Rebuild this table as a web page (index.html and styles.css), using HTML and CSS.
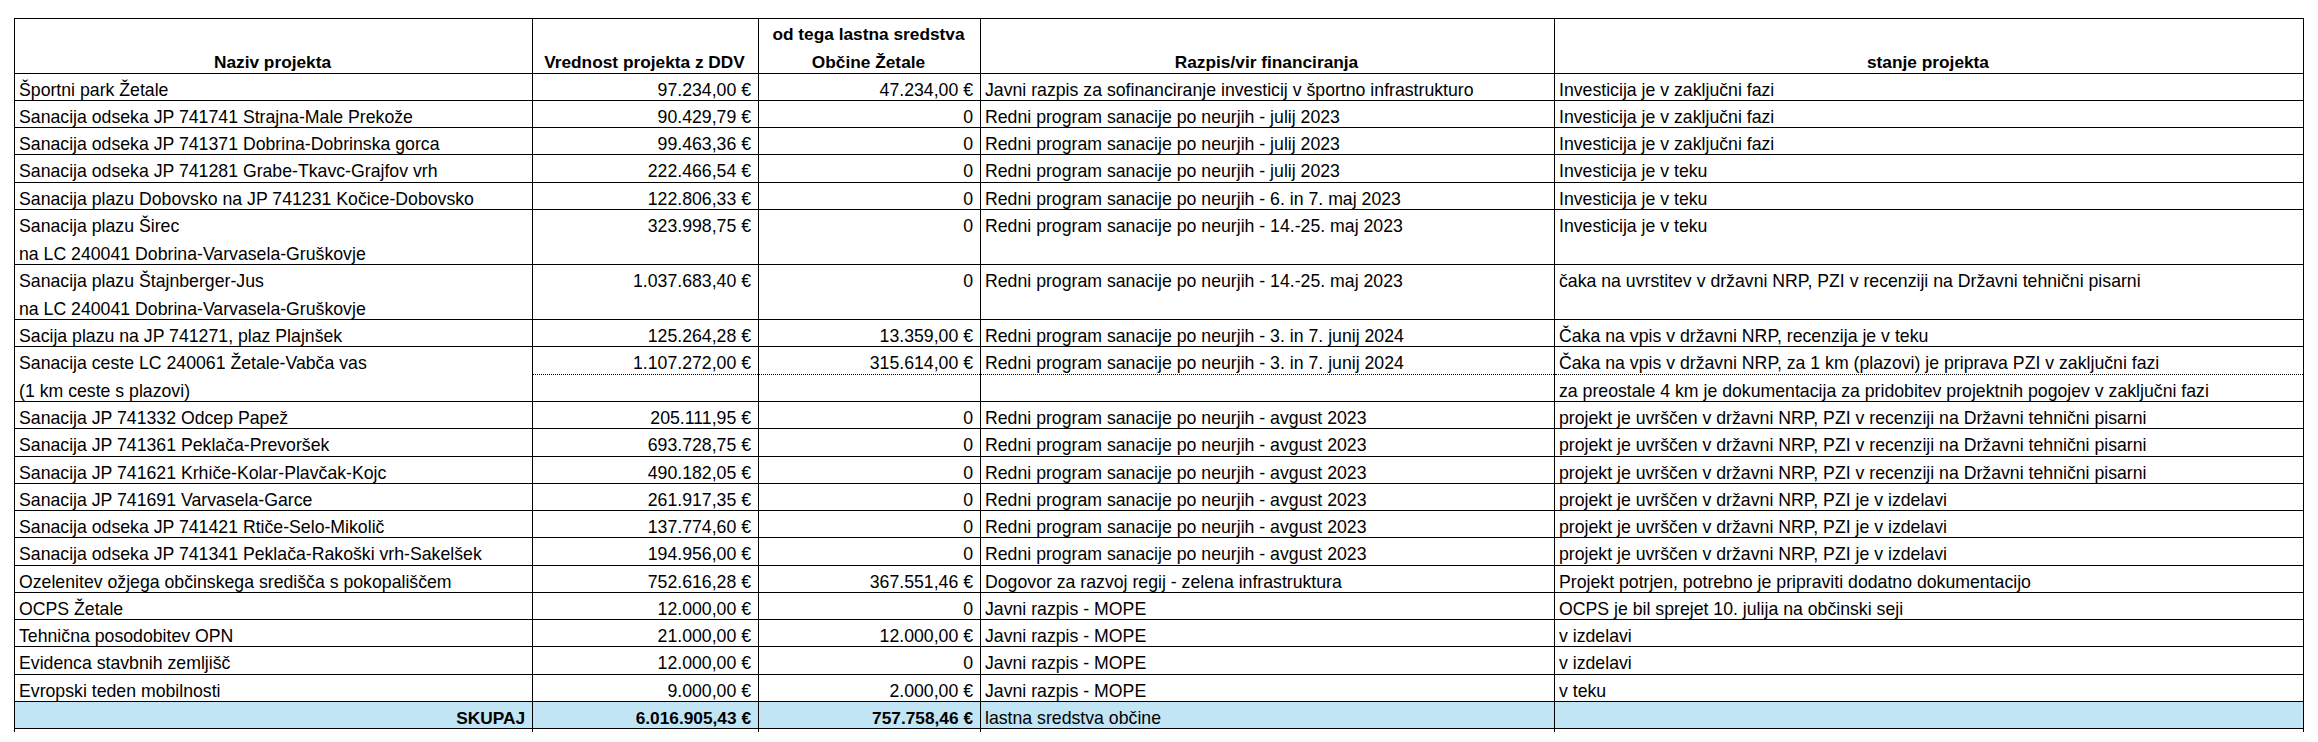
FILE: index.html
```html
<!DOCTYPE html>
<html lang="sl">
<head>
<meta charset="utf-8">
<title>Projekti</title>
<link rel="stylesheet" href="styles.css">
</head>
<body>
<div class="sheet">
<table class="grid">
  <colgroup>
    <col class="c-name"><col class="c-val"><col class="c-own"><col class="c-src"><col class="c-state">
  </colgroup>
  <thead>
    <tr class="head">
      <th>Naziv projekta</th>
      <th>Vrednost projekta z DDV</th>
      <th><div>od tega lastna sredstva</div><div class="l2">Občine Žetale</div></th>
      <th>Razpis/vir financiranja</th>
      <th>stanje projekta</th>
    </tr>
  </thead>
  <tbody>
    <tr><td>Športni park Žetale</td><td class="num">97.234,00 €</td><td class="num">47.234,00 €</td><td>Javni razpis za sofinanciranje investicij v športno infrastrukturo</td><td>Investicija je v zaključni fazi</td></tr>
    <tr><td>Sanacija odseka JP 741741 Strajna-Male Prekože</td><td class="num">90.429,79 €</td><td class="num">0</td><td>Redni program sanacije po neurjih - julij 2023</td><td>Investicija je v zaključni fazi</td></tr>
    <tr><td>Sanacija odseka JP 741371 Dobrina-Dobrinska gorca</td><td class="num">99.463,36 €</td><td class="num">0</td><td>Redni program sanacije po neurjih - julij 2023</td><td>Investicija je v zaključni fazi</td></tr>
    <tr><td>Sanacija odseka JP 741281 Grabe-Tkavc-Grajfov vrh</td><td class="num">222.466,54 €</td><td class="num">0</td><td>Redni program sanacije po neurjih - julij 2023</td><td>Investicija je v teku</td></tr>
    <tr><td>Sanacija plazu Dobovsko na JP 741231 Kočice-Dobovsko</td><td class="num">122.806,33 €</td><td class="num">0</td><td>Redni program sanacije po neurjih - 6. in 7. maj 2023</td><td>Investicija je v teku</td></tr>
    <tr class="dbl"><td><div>Sanacija plazu Širec</div><div class="l2">na LC 240041 Dobrina-Varvasela-Gruškovje</div></td><td class="num">323.998,75 €</td><td class="num">0</td><td>Redni program sanacije po neurjih - 14.-25. maj 2023</td><td>Investicija je v teku</td></tr>
    <tr class="dbl"><td><div>Sanacija plazu Štajnberger-Jus</div><div class="l2">na LC 240041 Dobrina-Varvasela-Gruškovje</div></td><td class="num">1.037.683,40 €</td><td class="num">0</td><td>Redni program sanacije po neurjih - 14.-25. maj 2023</td><td>čaka na uvrstitev v državni NRP, PZI v recenziji na Državni tehnični pisarni</td></tr>
    <tr><td>Sacija plazu na JP 741271, plaz Plajnšek</td><td class="num">125.264,28 €</td><td class="num">13.359,00 €</td><td>Redni program sanacije po neurjih - 3. in 7. junij 2024</td><td>Čaka na vpis v državni NRP, recenzija je v teku</td></tr>
    <tr class="split-a"><td rowspan="2"><div>Sanacija ceste LC 240061 Žetale-Vabča vas</div><div class="l2">(1 km ceste s plazovi)</div></td><td class="num">1.107.272,00 €</td><td class="num">315.614,00 €</td><td>Redni program sanacije po neurjih - 3. in 7. junij 2024</td><td>Čaka na vpis v državni NRP, za 1 km (plazovi) je priprava PZI v zaključni fazi</td></tr>
    <tr class="split-b"><td></td><td></td><td></td><td>za preostale 4 km je dokumentacija za pridobitev projektnih pogojev v zaključni fazi</td></tr>
    <tr><td>Sanacija JP 741332 Odcep Papež</td><td class="num">205.111,95 €</td><td class="num">0</td><td>Redni program sanacije po neurjih - avgust 2023</td><td>projekt je uvrščen v državni NRP, PZI v recenziji na Državni tehnični pisarni</td></tr>
    <tr><td>Sanacija JP 741361 Peklača-Prevoršek</td><td class="num">693.728,75 €</td><td class="num">0</td><td>Redni program sanacije po neurjih - avgust 2023</td><td>projekt je uvrščen v državni NRP, PZI v recenziji na Državni tehnični pisarni</td></tr>
    <tr><td>Sanacija JP 741621 Krhiče-Kolar-Plavčak-Kojc</td><td class="num">490.182,05 €</td><td class="num">0</td><td>Redni program sanacije po neurjih - avgust 2023</td><td>projekt je uvrščen v državni NRP, PZI v recenziji na Državni tehnični pisarni</td></tr>
    <tr><td>Sanacija JP 741691 Varvasela-Garce</td><td class="num">261.917,35 €</td><td class="num">0</td><td>Redni program sanacije po neurjih - avgust 2023</td><td>projekt je uvrščen v državni NRP, PZI je v izdelavi</td></tr>
    <tr><td>Sanacija odseka JP 741421 Rtiče-Selo-Mikolič</td><td class="num">137.774,60 €</td><td class="num">0</td><td>Redni program sanacije po neurjih - avgust 2023</td><td>projekt je uvrščen v državni NRP, PZI je v izdelavi</td></tr>
    <tr><td>Sanacija odseka JP 741341 Peklača-Rakoški vrh-Sakelšek</td><td class="num">194.956,00 €</td><td class="num">0</td><td>Redni program sanacije po neurjih - avgust 2023</td><td>projekt je uvrščen v državni NRP, PZI je v izdelavi</td></tr>
    <tr><td>Ozelenitev ožjega občinskega središča s pokopališčem</td><td class="num">752.616,28 €</td><td class="num">367.551,46 €</td><td>Dogovor za razvoj regij - zelena infrastruktura</td><td>Projekt potrjen, potrebno je pripraviti dodatno dokumentacijo</td></tr>
    <tr><td>OCPS Žetale</td><td class="num">12.000,00 €</td><td class="num">0</td><td>Javni razpis - MOPE</td><td>OCPS je bil sprejet 10. julija na občinski seji</td></tr>
    <tr><td>Tehnična posodobitev OPN</td><td class="num">21.000,00 €</td><td class="num">12.000,00 €</td><td>Javni razpis - MOPE</td><td>v izdelavi</td></tr>
    <tr><td>Evidenca stavbnih zemljišč</td><td class="num">12.000,00 €</td><td class="num">0</td><td>Javni razpis - MOPE</td><td>v izdelavi</td></tr>
    <tr><td>Evropski teden mobilnosti</td><td class="num">9.000,00 €</td><td class="num">2.000,00 €</td><td>Javni razpis - MOPE</td><td>v teku</td></tr>
    <tr class="total"><td class="num strong">SKUPAJ</td><td class="num strong">6.016.905,43 €</td><td class="num strong">757.758,46 €</td><td>lastna sredstva občine</td><td></td></tr>
    <tr class="tail"><td></td><td></td><td></td><td></td><td></td></tr>
  </tbody>
</table>
</div>
</body>
</html>
```
FILE: styles.css
```css
html, body {
  margin: 0;
  padding: 0;
  background: #ffffff;
}

body {
  font-family: "Liberation Sans", Arial, sans-serif;
  font-size: 17.7px;
  color: #000000;
}

.sheet {
  padding: 18px 0 0 14px;
}

.grid {
  border-collapse: collapse;
  table-layout: fixed;
  width: 2289px;
}

.c-name { width: 518px; }
.c-val { width: 226px; }
.c-own { width: 222px; }
.c-src { width: 574px; }
.c-state { width: 749px; }

.grid tr { height: 27.25px; }
.grid tr.head,
.grid tr.dbl { height: 54.5px; }

.grid td,
.grid th {
  border: 1px solid #000000;
  padding: 6px 6px 0 4px;
  line-height: 20px;
  vertical-align: top;
  white-space: nowrap;
  overflow: hidden;
  text-align: left;
  font-weight: normal;
}

.grid th {
  font-size: 17.3px;
  font-weight: bold;
  text-align: center;
  vertical-align: bottom;
  padding-top: 0;
  padding-bottom: 1px;
}

.grid .num {
  text-align: right;
  padding-right: 7px;
}

.grid .strong {
  font-weight: bold;
  font-size: 17.3px;
}

.l2 {
  margin-top: 8px;
}

.grid tr.split-a td {
  border-bottom-style: dotted;
}
.grid tr.split-a td[rowspan] {
  border-bottom-style: solid;
}
.grid tr.split-b td {
  border-top-style: dotted;
}

.grid tr.total td {
  background: #c1e5f5;
}

.grid tr.tail {
  height: 3px;
}
.grid tr.tail td {
  height: 3px;
  padding: 0;
  line-height: 0;
  font-size: 0;
  border-top: none;
  border-bottom: none;
}
```
